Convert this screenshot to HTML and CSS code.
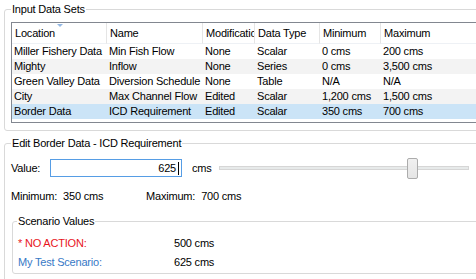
FILE: index.html
```html
<!DOCTYPE html>
<html lang="en">
<head>
<meta charset="UTF-8">
<title>Input Data Sets</title>
<link rel="stylesheet" href="styles.css">
</head>
<body>
<div class="page">
  <fieldset class="group">
    <legend class="group-title">Input Data Sets</legend>
    <div class="group-body data-body">
      <div class="grid-wrap">
        <table class="grid">
          <colgroup>
            <col class="c-loc"><col class="c-name"><col class="c-mod"><col class="c-type"><col class="c-min"><col class="c-max">
          </colgroup>
          <thead>
            <tr>
              <th class="sorted">Location<span class="sort-arrow"></span></th>
              <th>Name</th>
              <th>Modification</th>
              <th>Data Type</th>
              <th>Minimum</th>
              <th>Maximum</th>
            </tr>
          </thead>
          <tbody>
            <tr><td>Miller Fishery Data</td><td>Min Fish Flow</td><td>None</td><td>Scalar</td><td>0 cms</td><td>200 cms</td></tr>
            <tr class="alt"><td>Mighty</td><td>Inflow</td><td>None</td><td>Series</td><td>0 cms</td><td>3,500 cms</td></tr>
            <tr><td>Green Valley Data</td><td>Diversion Schedule</td><td>None</td><td>Table</td><td>N/A</td><td>N/A</td></tr>
            <tr class="alt"><td>City</td><td>Max Channel Flow</td><td>Edited</td><td>Scalar</td><td>1,200 cms</td><td>1,500 cms</td></tr>
            <tr class="selected"><td>Border Data</td><td>ICD Requirement</td><td>Edited</td><td>Scalar</td><td>350 cms</td><td>700 cms</td></tr>
          </tbody>
        </table>
      </div>
    </div>
  </fieldset>

  <fieldset class="group edit-group">
    <legend class="group-title">Edit Border Data - ICD Requirement</legend>
    <div class="group-body edit-body">
      <div class="value-row">
        <span class="value-label">Value:</span>
        <div class="value-box"><span>625</span><span class="caret"></span></div>
        <span class="unit">cms</span>
        <div class="track">
          <div class="thumb"></div>
        </div>
      </div>
      <div class="range-row">
        <span class="range-item">Minimum:<span class="range-val">350 cms</span></span>
        <span class="range-item">Maximum:<span class="range-val">700 cms</span></span>
      </div>
      <fieldset class="group scenario-group">
        <legend class="group-title">Scenario Values</legend>
        <div class="scenario-body">
          <div class="scenario-row">
            <span class="scenario-name base">* NO ACTION:</span>
            <span>500 cms</span>
          </div>
          <div class="scenario-row">
            <span class="scenario-name mine">My Test Scenario:</span>
            <span>625 cms</span>
          </div>
        </div>
      </fieldset>
    </div>
  </fieldset>
</div>
</body>
</html>
```

FILE: styles.css
```css
html, body {
  margin: 0;
  padding: 0;
  overflow: hidden;
  background: #fff;
}

body {
  font-family: "Liberation Sans", Arial, sans-serif;
  font-size: 11px;
  letter-spacing: -0.2px;
  color: #000;
}

.page {
  width: 560px;
  padding: 3px 0 0 4px;
}

.group {
  margin: 0;
  padding: 0;
  min-width: 0;
  border: 1px solid #d9d9d9;
  border-radius: 3px;
}

.group-title {
  margin-left: 6px;
  padding: 0 1px;
  line-height: 13px;
}

/* input data sets */
.data-body {
  padding: 6px 0 7px 6px;
}

.grid-wrap {
  border: 1px solid #828790;
  border-right: none;
  padding-bottom: 3px;
  overflow: hidden;
}

.grid {
  table-layout: fixed;
  border-collapse: separate;
  border-spacing: 0;
  width: 489px;
}

.c-loc { width: 95px; }
.c-name { width: 96px; }
.c-mod { width: 52px; }
.c-type { width: 65px; }
.c-min { width: 61px; }
.c-max { width: 120px; }

.grid th {
  font-weight: normal;
  text-align: left;
  line-height: 20px;
  padding: 0 0 0 3px;
  border-right: 1px solid #e5e5e5;
  border-bottom: 1px solid #eef1f5;
  white-space: nowrap;
  overflow: hidden;
  text-overflow: clip;
}

.grid th.sorted {
  position: relative;
}

.sort-arrow {
  position: absolute;
  left: 45px;
  top: 1px;
  width: 0;
  height: 0;
  border-left: 3px solid transparent;
  border-right: 3px solid transparent;
  border-top: 3px solid #93b8e4;
}

.grid td {
  line-height: 15px;
  padding: 0 0 0 2px;
  white-space: nowrap;
  overflow: hidden;
}

.grid tr.alt td {
  background: #f3f3f3;
}

.grid tr.selected td {
  background: #cbe4f7;
}

/* edit group */
.edit-group {
  margin-top: 6px;
}

.edit-body {
  padding: 9px 0 20px 0;
}

.value-row {
  display: flex;
  align-items: center;
  height: 18px;
  padding-left: 6px;
}

.value-label {
  width: 39px;
}

.value-box {
  box-sizing: border-box;
  width: 132px;
  height: 18px;
  border: 1px solid #569de5;
  display: flex;
  align-items: center;
  justify-content: flex-end;
  padding-right: 2px;
}

.caret {
  width: 1px;
  height: 13px;
  margin-left: 2px;
  background: #000;
}

.unit {
  width: 27px;
  margin-left: 10px;
}

.track {
  position: relative;
  box-sizing: border-box;
  width: 250px;
  height: 4px;
  background: #e7eaea;
  border: 1px solid #d6d6d6;
}

.thumb {
  position: absolute;
  left: 187px;
  top: -9px;
  box-sizing: border-box;
  width: 11px;
  height: 21px;
  border: 1px solid #acacac;
  border-radius: 2px;
  background: linear-gradient(#f0f0f0, #e5e5e5);
}

.range-row {
  display: flex;
  margin-top: 13px;
  padding-left: 6px;
  line-height: 13px;
}

.range-item {
  width: 135px;
}

.range-val {
  margin-left: 6px;
}

/* scenario values */
.scenario-group {
  margin: 12px 0 0 7px;
}

.scenario-group .group-title {
  margin-left: 4px;
}

.scenario-body {
  padding: 6px 0 1px 5px;
}

.scenario-row {
  display: flex;
  line-height: 19px;
}

.scenario-name {
  width: 156px;
}

.scenario-name.base {
  color: #e8141c;
}

.scenario-name.mine {
  color: #3779c6;
}
```
